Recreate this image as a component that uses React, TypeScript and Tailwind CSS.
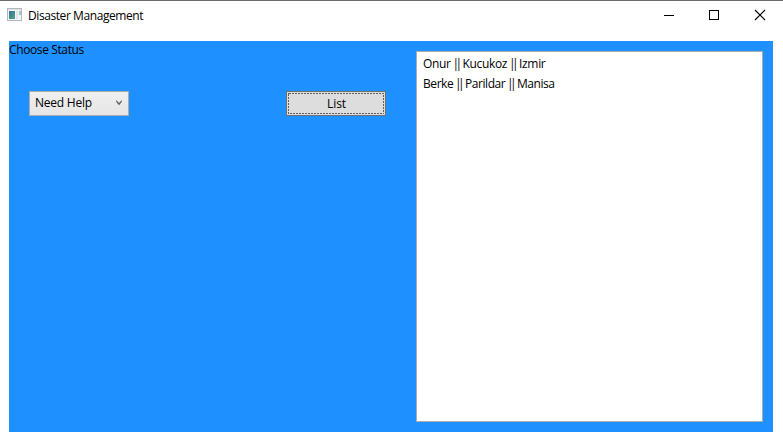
import React from "react";

const people = [
  { parts: ["Onur", "Kucukoz", "Izmir"], tracking: "tracking-[-0.33px]" },
  { parts: ["Berke", "Parildar", "Manisa"], tracking: "tracking-[-0.43px]" },
];

function TitleBar() {
  return (
    <header className="flex h-[41px] shrink-0 items-start border-t border-[#6b6b6b] bg-white pl-[7px]">
      <svg className="mt-[7px] shrink-0" width="16" height="14" viewBox="0 0 16 14" shapeRendering="crispEdges">
        <defs>
          <linearGradient id="pane" x1="0" y1="0" x2="1" y2="1">
            <stop offset="0" stopColor="#3d6fa5" />
            <stop offset="1" stopColor="#4fa67c" />
          </linearGradient>
        </defs>
        <rect x="0.5" y="0.5" width="14" height="12" fill="#f3f4f5" stroke="#b3b8be" />
        <rect x="1" y="1" width="13" height="1" fill="#dde1e5" />
        <rect x="2" y="3" width="6" height="8" fill="url(#pane)" />
        <rect x="9" y="3" width="2" height="8" fill="#e3e6e8" />
        <rect x="12" y="3" width="2" height="4" fill="#a9c4b8" />
      </svg>
      <h1 className="ml-[5px] mt-[7px] whitespace-pre text-[12px] leading-4 tracking-[-0.42px]">Disaster Management</h1>
      <div className="ml-auto flex h-[29px]">
        <button className="flex w-[45px] justify-center" aria-label="Minimize">
          <svg width="45" height="29" shapeRendering="crispEdges"><path d="M17 14.5h10" stroke="#000" /></svg>
        </button>
        <button className="flex w-[45px] justify-center" aria-label="Maximize">
          <svg width="45" height="29" shapeRendering="crispEdges"><rect x="17.5" y="9.5" width="9" height="9" fill="none" stroke="#000" /></svg>
        </button>
        <button className="flex w-[46px] justify-center" aria-label="Close">
          <svg width="46" height="29"><path d="M18 9l10 10M28 9l-10 10" stroke="#000" strokeWidth="1.1" /></svg>
        </button>
      </div>
    </header>
  );
}

function Bars() {
  return <span className="ml-[-1px] mr-[1.3px] tracking-[-3.6px]">||</span>;
}

export default function App() {
  return (
    <div className="flex h-[439px] w-[783px] flex-col overflow-hidden bg-white font-['Open_Sans','Noto_Sans',sans-serif] text-black">
      <TitleBar />
      <main className="ml-[9px] flex h-[391px] w-[764px] bg-[#1e90ff]">
        <section className="w-[407px]">
          <p className="h-[50px] whitespace-pre pt-px text-[12px] leading-4 tracking-[-0.38px]">Choose Status</p>
          <div className="flex pl-5">
            <button className="flex h-[25px] w-[100px] items-center border border-[#acacac] bg-linear-to-b from-[#f0f0f0] to-[#e5e5e5] pb-[2px] pl-[5px]">
              <span className="whitespace-pre text-[12px] leading-4 tracking-[-0.24px]">Need Help</span>
              <svg className="ml-auto mr-[6px]" width="6" height="6" viewBox="0 0 6 6">
                <path d="M0.5 0.4v1.5L3 5.1 5.5 1.9V.4L3 3.3Z" fill="#606060" stroke="#606060" strokeWidth=".4" />
              </svg>
            </button>
            <button className="ml-[157px] h-[25px] w-[100px] border border-[#707070] bg-[#dddddd] p-px">
              <span className="relative flex h-full items-center justify-center pl-px text-[12px] leading-4 tracking-[-0.1px]">
                <svg className="absolute inset-0" width="96" height="21" shapeRendering="crispEdges">
                  <rect x="0.5" y="0.5" width="95" height="20" fill="none" stroke="#606060" strokeDasharray="2 1" />
                </svg>
                List
              </span>
            </button>
          </div>
        </section>
        <ul className="mt-[10px] h-[371px] w-[347px] border border-[#abadb3] bg-white pl-[6px] pt-[2px]">
          {people.map(({ parts: [first, last, city], tracking }) => (
            <li key={first} className={`h-5 whitespace-pre text-[12px] leading-5 ${tracking}`}>
              {first} <Bars /> {last} <Bars /> {city}
            </li>
          ))}
        </ul>
      </main>
    </div>
  );
}
